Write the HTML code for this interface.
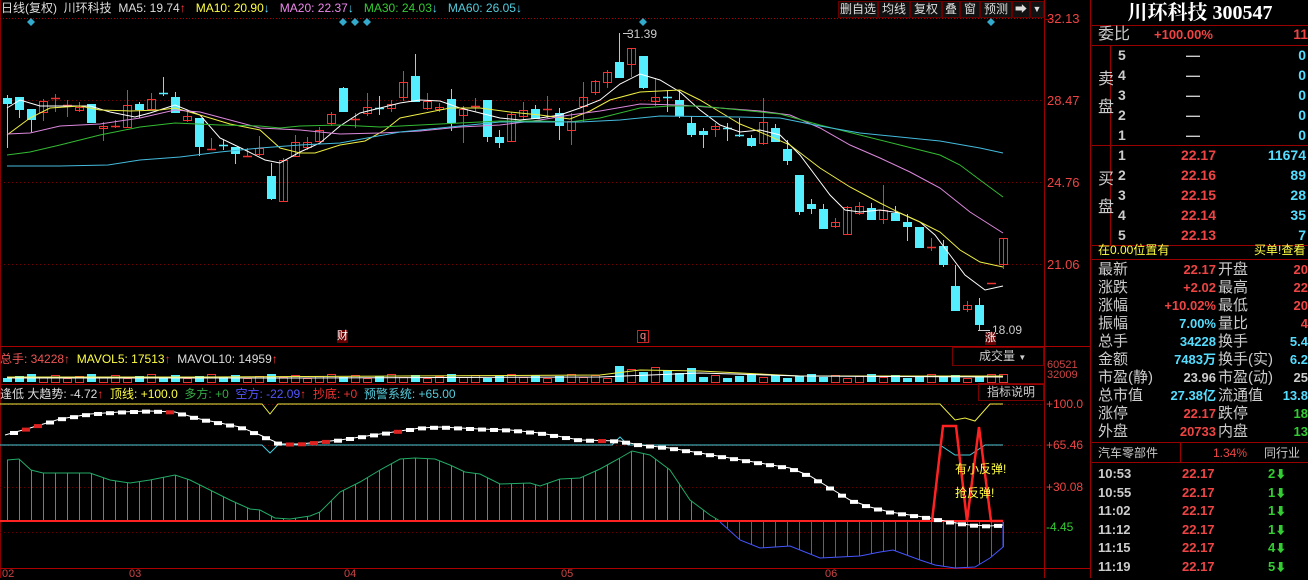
<!DOCTYPE html>
<html><head><meta charset="utf-8">
<style>
*{margin:0;padding:0;box-sizing:border-box}
body{width:1308px;height:578px;background:#000;overflow:hidden;position:relative;font-family:"Liberation Sans","Noto Sans CJK SC",sans-serif;font-size:12px;color:#ccc}
.a{position:absolute;white-space:nowrap}
svg{position:absolute;left:0;top:0}
.rp{position:absolute;left:1092px;top:0;width:216px;height:578px;overflow:hidden}
.row{position:absolute;left:0;width:216px;height:19px;font-size:14px;line-height:19px;overflow:hidden}
.row span{position:absolute}
.btn{position:absolute;top:1px;height:17px;border:1px solid #600;color:#ddd;font-size:12px;line-height:15px;text-align:center;background:#111}
</style></head><body>
<svg id="s" width="1308" height="578"></svg>

<div class="a" style="left:1px;top:1px;font-size:12px;line-height:14px">
<span style="color:#ddd">日线(复权)&nbsp; 川环科技&nbsp; MA5: 19.74</span><span style="color:#f33">↑</span>
<span style="color:#ff4">&nbsp; MA10: 20.90</span><span style="color:#5df">↓</span>
<span style="color:#e8e">&nbsp; MA20: 22.37</span><span style="color:#5df">↓</span>
<span style="color:#3c3">&nbsp; MA30: 24.03</span><span style="color:#5df">↓</span>
<span style="color:#5cd">&nbsp; MA60: 26.05</span><span style="color:#5df">↓</span>
</div>
<div class="btn" style="left:838px;width:40px">删自选</div>
<div class="btn" style="left:878px;width:32px">均线</div>
<div class="btn" style="left:910px;width:32px">复权</div>
<div class="btn" style="left:942px;width:18px">叠</div>
<div class="btn" style="left:960px;width:20px">窗</div>
<div class="btn" style="left:980px;width:32px">预测</div>
<div class="btn" style="left:1012px;width:18px">➡</div>
<div class="btn" style="left:1030px;width:14px;font-size:9px">▼</div>

<div class="a" style="left:1047px;top:11px;color:#e44;font-size:13px">32.13</div>
<div class="a" style="left:1047px;top:93px;color:#e44;font-size:13px">28.47</div>
<div class="a" style="left:1047px;top:175px;color:#e44;font-size:13px">24.76</div>
<div class="a" style="left:1047px;top:257px;color:#e44;font-size:13px">21.06</div>
<div class="a" style="left:627px;top:27px;color:#ccc;font-size:12px">31.39</div>
<div class="a" style="left:992px;top:323px;color:#ccc;font-size:12px">18.09</div>
<div class="a" style="left:337px;top:330px;background:#600;color:#fff;font-size:11px;line-height:13px">财</div>
<div class="a" style="left:637px;top:330px;border:1px solid #c22;color:#f88;font-size:11px;line-height:11px;padding:0 2px">q</div>
<div class="a" style="left:985px;top:332px;background:#600;color:#fff;font-size:11px;line-height:13px">涨</div>

<div class="a" style="left:0;top:350px;font-size:12px"><span style="color:#e55">总手: 34228↑</span>&nbsp; <span style="color:#ff4">MAVOL5: 17513</span><span style="color:#f33">↑</span>&nbsp; <span style="color:#ddd">MAVOL10: 14959</span><span style="color:#f33">↑</span></div>
<div class="a" style="left:952px;top:347px;width:92px;height:19px;border:1px solid #700;color:#ccc;font-size:12px;line-height:17px;padding-left:26px">成交量 <span style="font-size:8px">▼</span></div>
<div class="a" style="left:1047px;top:360px;color:#c44;font-size:11px;line-height:10px">60521<br>32009</div>
<div class="a" style="left:0;top:385px;font-size:12px"><span style="color:#ddd">逢低 大趋势: -4.72</span><span style="color:#f33">↑</span>&nbsp; <span style="color:#ff4">顶线: +100.0</span>&nbsp;<span style="color:#3a4"> 多方: +0</span>&nbsp;<span style="color:#55f"> 空方: -22.09</span><span style="color:#f33">↑</span>&nbsp;<span style="color:#e33"> 抄底: +0</span>&nbsp;<span style="color:#5cd"> 预警系统: +65.00</span></div>
<div class="a" style="left:978px;top:383px;width:66px;height:18px;border:1px solid #700;color:#ccc;font-size:12px;line-height:16px;text-align:center">指标说明</div>
<div class="a" style="left:1046px;top:397px;color:#e44;font-size:12px">+100.0</div>
<div class="a" style="left:1046px;top:438px;color:#e44;font-size:12px">+65.46</div>
<div class="a" style="left:1046px;top:480px;color:#e44;font-size:12px">+30.08</div>
<div class="a" style="left:1046px;top:520px;color:#3c3;font-size:12px">-4.45</div>
<div class="a" style="left:955px;top:460px;color:#ff4;font-size:12px">有小反弹!</div>
<div class="a" style="left:955px;top:484px;color:#ff4;font-size:12px">抢反弹!</div>
<div class="a" style="left:2px;top:569px;color:#c44;font-size:11px;line-height:10px">02</div>
<div class="a" style="left:129px;top:569px;color:#c44;font-size:11px;line-height:10px">03</div>
<div class="a" style="left:344px;top:569px;color:#c44;font-size:11px;line-height:10px">04</div>
<div class="a" style="left:561px;top:569px;color:#c44;font-size:11px;line-height:10px">05</div>
<div class="a" style="left:825px;top:569px;color:#c44;font-size:11px;line-height:10px">06</div>

<div class="rp">
<div class="a" style="left:0;top:1px;width:216px;text-align:center;color:#fff;font-size:20px;font-weight:bold;line-height:24px;font-family:'Liberation Serif','Noto Serif CJK SC',serif">川环科技 300547</div>
<div class="row" style="top:25px"><span style="left:6px;color:#ccc;font-size:16px">委比</span><span style="left:62px;color:#e44;font-weight:bold;font-size:13px">+100.00%</span><span style="right:0;color:#e44;font-weight:bold">11</span></div>
<div class="a" style="left:6px;top:66px;color:#ccc;font-size:16px;line-height:28px">卖<br>盘</div>
<div class="a" style="left:6px;top:166px;color:#ccc;font-size:16px;line-height:28px">买<br>盘</div>
<div id="ob"></div>
<div class="row" style="top:241px;font-size:12px"><span style="left:6px;color:#ff4">在0.00位置有</span><span style="left:162px;color:#ff4">买单!查看</span></div>
<div id="info"></div>
<div class="row" style="top:444px;font-size:12px"><span style="left:6px;color:#ccc">汽车零部件</span><span style="left:121px;color:#e44">1.34%</span><span style="left:172px;color:#ccc">同行业比</span></div>
<div id="tr"></div>
</div>

<script>
const S=document.getElementById('s');let h='';
function L(x1,y1,x2,y2,c,w,d){h+=`<line x1="${x1}" y1="${y1}" x2="${x2}" y2="${y2}" stroke="${c}" stroke-width="${w||1}"${d?` stroke-dasharray="${d}"`:''}/>`}
function R(x,y,w,hh,c,f){h+=`<rect x="${x}" y="${y}" width="${w}" height="${hh}" ${f?`fill="${c}"`:`fill="none" stroke="${c}"`}/>`}
function P(pts,c,w){h+=`<polyline points="${pts.map(p=>p.join(',')).join(' ')}" fill="none" stroke="${c}" stroke-width="${w||1}"/>`}
L(0.5,0,0.5,578,'#800');L(1044.5,0,1044.5,578,'#900');L(1090.5,0,1090.5,578,'#900');
L(0,18.5,1044,18.5,'#a00',1,'1 2');
[100,182,264].forEach(y=>L(0,y+.5,1044,y+.5,'#700',1,'1 3'));
L(1044,19.5,1052,19.5,'#900');
L(0,346.5,1090,346.5,'#a00');L(0,384.5,1044,384.5,'#900');L(0,568.5,1090,568.5,'#a00');
[404,445,487].forEach(y=>L(0,y+.5,1044,y+.5,'#600',1,'1 3'));
L(0,532.5,1044,532.5,'#600',1,'1 3');
[31,343,355,367,643,991].forEach(x=>h+=`<polygon points="${x},18 ${x+4},22 ${x},26 ${x-4},22" fill="#3ac"/>`);
const C=[[7,'d',98,103,95,148],[19,'d',97,109,97,118],[31,'d',109,119,109,132],[43,'u',101,112,99,121],[55,'u',98,99,94,112],[67,'u',105,106,100,117],[79,'u',107,110,102,112],[91,'d',104,122,104,122],[103,'u',126,128,122,141],[115,'u',126,127,120,128],[127,'u',105,127,90,128],[139,'d',104,109,102,118],[151,'u',99,109,93,110],[163,'d',93,94,77,96],[175,'d',97,112,92,112],[187,'u',116,120,112,122],[199,'d',118,146,118,156],[211,'u',149,150,138,150],[223,'d',145,146,140,150],[235,'d',147,153,147,164],[247,'u',156,157,148,157],[259,'u',148,154,136,156],[271,'d',176,198,163,200],[283,'u',160,201,158,202],[295,'u',142,156,135,156],[307,'u',142,147,137,150],[319,'u',130,141,127,141],[331,'u',114,123,112,126],[343,'d',88,111,87,111],[355,'u',119,120,113,128],[367,'u',107,113,93,116],[379,'d',108,109,96,115],[391,'u',104,108,100,112],[403,'u',82,97,71,101],[415,'d',76,101,54,101],[427,'u',101,108,93,110],[439,'u',107,109,103,112],[451,'d',99,122,89,131],[463,'u',109,115,106,143],[475,'u',106,107,98,112],[487,'d',100,136,100,142],[499,'d',137,142,130,148],[511,'u',114,141,112,141],
[523,'u',110,116,102,120],[535,'d',109,118,105,118],[547,'u',109,110,96,118],[559,'d',113,125,108,140],[571,'u',121,130,113,145],[583,'u',97,106,82,122],[595,'u',81,92,80,95],[607,'u',72,82,70,88],[619,'d',62,77,33,78],[631,'u',48,64,48,77],[643,'d',56,87,56,89],[655,'u',97,101,78,106],[667,'d',97,98,90,112],[679,'d',100,115,90,118],[691,'d',123,134,116,137],[703,'d',131,134,128,148],[715,'u',126,129,123,137],[727,'d',128,129,123,141],[739,'d',135,136,118,137],[751,'d',138,145,135,147],[763,'u',122,143,98,145],[775,'d',128,141,124,141],[787,'d',149,160,140,165],[799,'d',175,211,175,215],[811,'d',204,208,199,214],[823,'d',209,228,204,228],[835,'u',222,226,218,228],[847,'u',207,234,206,234],[859,'u',206,213,202,215],[871,'d',208,219,203,219],[883,'u',210,219,185,224],[895,'d',213,220,206,221],[907,'d',222,226,214,241],[919,'d',227,247,227,247],[931,'u',247,248,238,251],[943,'d',246,264,240,267],[955,'d',286,310,265,310],[967,'u',305,309,301,312],[979,'d',305,324,298,330],[991,'u',283,284,283,284],[1003,'u',238,264,238,269]];
C.forEach(([x,t,bt,bb,hi,lo])=>{const c=t=='u'?'#e33':'#5ef';L(x+.5,hi,x+.5,lo,c);
 if(bb-bt<=1){L(x-4,bt+.5,x+5,bt+.5,c,1.5)}else if(t=='u'){R(x-3.5,bt+.5,8,bb-bt,c)}else{R(x-4,bt,9,bb-bt+1,c,1)}});
L(623,33.5,631,33.5,'#ccc');L(978,330.5,990,330.5,'#ccc');
P([[7,108],[20,100],[40,106],[60,106],[90,106],[110,112],[135,117],[150,113],[175,105],[200,115],[220,138],[245,150],[265,160],[280,163],[300,152],[320,143],[340,126],[360,113],[380,108],[400,103],[420,100],[440,101],[460,108],[480,113],[500,118],[520,120],[540,118],[560,115],[580,108],[600,100],[620,84],[640,74],[660,80],[680,92],[700,110],[720,125],[740,132],[760,130],[780,135],[800,155],[815,175],[830,195],[845,210],[860,212],[880,210],[900,213],[920,222],[935,235],[950,255],[965,275],[985,290],[1003,286]],'#fff');
P([[7,135],[30,118],[50,108],[80,106],[100,110],[130,111],[160,110],[175,108],[200,115],[230,124],[260,130],[280,148],[300,153],[315,153],[340,145],[365,141],[385,130],[400,118],[420,114],[450,108],[480,108],[510,112],[540,115],[570,119],[590,111],[610,100],[640,92],[680,90],[700,100],[720,112],[740,124],[760,132],[790,145],[820,168],[850,187],[880,203],[900,213],[920,222],[940,232],[960,250],[980,262],[1003,267]],'#ee4');
P([[7,134],[30,133],[60,126],[100,124],[140,118],[175,110],[200,112],[230,120],[260,128],[300,130],[340,134],[380,133],[420,131],[460,127],[500,125],[540,120],[570,115],[600,111],[640,104],[680,105],[720,108],[760,111],[790,115],[820,128],[850,145],[880,158],[910,172],[940,188],[970,212],[1003,233]],'#d8d');
P([[7,155],[30,152],[60,145],[100,135],[140,127],[175,123],[220,125],[260,126],[280,128],[300,126],[340,125],[380,127],[420,125],[460,123],[500,121],[540,121],[570,122],[600,118],[640,108],[670,106],[700,106],[740,110],[780,114],[820,125],[860,135],[900,145],[940,155],[960,165],[980,180],[1003,197]],'#3b3');
P([[7,166],[60,166],[108,165],[140,160],[180,157],[220,152],[260,148],[300,145],[340,143],[400,132],[450,127],[500,122],[580,122],[620,120],[660,116],[740,117],[780,118],[820,126],[860,133],[900,137],[940,141],[980,148],[1003,153]],'#4bd');
C.forEach(([x,t],i)=>{let v=4+((i*37)%5);if(x>615&&x<700)v=9+((i*13)%8);if(x>1000)v=8;const c=t=='u'?'#e33':'#5ef';
 if(t=='u')R(x-3.5,382.5-v,8,v,c);else R(x-4,382-v,9,v,c,1);});
P([[7,377],[200,377],[400,376],[600,375],[640,370],[700,371],[800,376],[1003,376]],'#ee4');
P([[7,378],[300,378],[600,377],[700,373],[800,376],[1003,377]],'#fff');
let gp=[[7,460],[19,459],[31,470],[43,473],[90,473],[110,480],[130,483],[150,480],[175,475],[190,480],[210,490],[230,500],[250,509],[260,510],[275,518],[290,519],[310,516],[320,512],[340,492],[360,482],[380,470],[400,459],[415,458],[435,459],[450,465],[465,472],[480,474],[500,484],[530,483],[540,486],[560,479],[580,478],[600,469],[620,458],[632,451],[650,455],[670,470],[690,500],[710,515],[720,521]];
function yat(pts,x){for(let i=1;i<pts.length;i++)if(x<=pts[i][0]){const[a,b]=pts[i-1],[c,d]=pts[i];return b+(d-b)*(x-a)/(c-a)}return pts[pts.length-1][1]}
for(let x=7;x<=720;x+=12)L(x+.5,yat(gp,x),x+.5,520,'#2a6');P(gp,'#2a6');
let bp=[[720,522],[740,540],[760,548],[790,546],[820,558],[860,556],[880,552],[893,550],[920,560],[935,565],[955,568],[975,567],[990,558],[1003,547],[1003,522]];
for(let x=727;x<=1003;x+=12)L(x+.5,522,x+.5,yat(bp,x),'#45f');P(bp,'#45f');
L(0,521,1003,521,'#f22',2);
P([[0,404],[262,404],[270,414],[278,404],[940,404],[955,420],[965,418],[975,421],[990,404],[1003,404]],'#ee4');
P([[0,445],[262,445],[270,453],[278,445],[612,445],[620,437],[628,445],[940,445],[955,455],[970,455],[985,445],[1003,445]],'#4cd');
let wp=[[5,435],[30,428],[60,419],[90,414],[120,412],[150,411],[175,412],[200,419],[220,423],[240,427],[260,435],[280,444],[300,444],[340,440],[380,434],[420,428],[440,427],[480,429],[510,430],[540,433],[580,440],[620,441],[640,445],[670,448],[700,453],[730,458],[760,463],[790,468],[810,476],[830,488],[850,500],[870,507],[890,512],[910,515],[930,518],[950,522],[970,525],[990,526],[1003,525]];
P(wp,'#fff');
for(let x=14;x<1003;x+=12){const y=yat(wp,x);const red=(x>20&&x<50)||(x>160&&x<180)||(x>280&&x<330)||(x>390&&x<410)||(x>590&&x<610);R(x-4,y-1.5,8,4,red?'#d22':'#fff',1)}
P([[932,521],[943,426],[956,426],[967,521],[979,427],[991,521],[1003,521]],'#f22',2.5);
[[1092,25],[1092,45],[1092,145],[1092,245],[1092,259],[1092,442],[1092,462]].forEach(([x,y])=>L(x,y+.5,1308,y+.5,'#900'));
L(1110.5,45,1110.5,245,'#900');L(1180.5,442,1180.5,462,'#900');
S.innerHTML=h;
let ob='';const sell=['5','4','3','2','1'];
sell.forEach((n,i)=>ob+=`<div class="row" style="top:${46+i*20}px;font-weight:bold"><span style="left:26px;color:#ccc">${n}</span><span style="left:94px;color:#ccc">—</span><span style="right:2px;color:#5df">0</span></div>`);
[['22.17','11674'],['22.16','89'],['22.15','28'],['22.14','35'],['22.13','7']].forEach(([p,v],i)=>ob+=`<div class="row" style="top:${146+i*20}px;font-weight:bold"><span style="left:26px;color:#ccc">${i+1}</span><span style="right:92px;color:#e44">${p}</span><span style="right:2px;color:#5df">${v}</span></div>`);
document.getElementById('ob').innerHTML=ob;
const I=[['最新','22.17','#e44','开盘','20','#e44'],['涨跌','+2.02','#e44','最高','22','#e44'],['涨幅','+10.02%','#e44','最低','20','#e44'],['振幅','7.00%','#5df','量比','4','#e44'],['总手','34228','#5df','换手','5.4','#5df'],['金额','7483万','#5df','换手(实)','6.2','#5df'],['市盈(静)','23.96','#ccc','市盈(动)','25','#ccc'],['总市值','27.38亿','#5df','流通值','13.8','#5df'],['涨停','22.17','#e44','跌停','18','#3c3'],['外盘','20733','#e44','内盘','13','#3c3']];
let s='';I.forEach((r,i)=>s+=`<div class="row" style="top:${261+i*18}px;height:18px;line-height:18px;font-size:15px"><span style="left:6px;color:#ccc">${r[0]}</span><span style="right:92px;color:${r[2]};font-weight:bold;font-size:13px">${r[1]}</span><span style="left:126px;color:#ccc">${r[3]}</span><span style="right:0;color:${r[5]};font-weight:bold;font-size:13px">${r[4]}</span></div>`);
document.getElementById('info').innerHTML=s;
let t='';[['10:53','2'],['10:55','1'],['11:02','1'],['11:12','1'],['11:15','4'],['11:19','5']].forEach(([a,b],i)=>t+=`<div class="row" style="top:${464+i*18.6}px;font-weight:bold;font-size:13px"><span style="left:6px;color:#ccc">${a}</span><span style="left:90px;color:#e44">22.17</span><span style="left:176px;color:#3c3">${b}<span style="position:static;font-size:11px">⬇</span></span></div>`);
document.getElementById('tr').innerHTML=t;
</script>
</body></html>
